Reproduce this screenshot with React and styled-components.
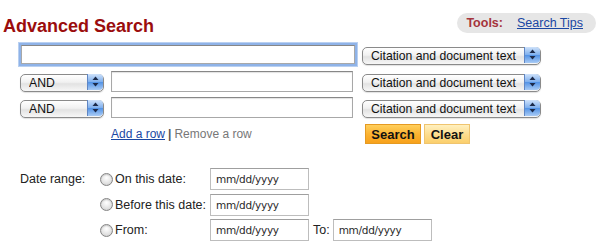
import styled, { createGlobalStyle } from "styled-components";

const GlobalStyle = createGlobalStyle`
  body {
    margin: 0;
    background: #fff;
    color: #222;
    font-family: "Liberation Sans", Arial, sans-serif;
  }
`;

const Page = styled.div`
  width: 600px;
`;

const Header = styled.header`
  display: flex;
  justify-content: space-between;
  align-items: flex-start;
  padding: 13px 4px 0 3px;
`;

const Title = styled.h1`
  margin: 2px 0 0;
  font-size: 18px;
  line-height: 22px;
  font-weight: 700;
  color: #9b0d0d;
`;

const ToolsPill = styled.div`
  display: flex;
  align-items: center;
  gap: 14px;
  height: 20px;
  padding: 0 13px 0 9px;
  border-radius: 10px;
  background: #e6e6e6;
  font-size: 12.5px;
`;

const ToolsLabel = styled.span`
  font-weight: 700;
  color: #a5343c;
`;

const Link = styled.a`
  color: #1a47a3;
  text-decoration: underline;
  cursor: pointer;
`;

const Form = styled.form`
  display: flex;
  flex-direction: column;
  gap: 5px;
  margin: 6px 0 0 19px;
`;

const QueryRow = styled.div`
  display: flex;
  align-items: center;
  padding-left: ${(p) => p.$indent || 0}px;
`;

const TermInput = styled.input`
  box-sizing: border-box;
  flex: none;
  width: ${(p) => p.$w}px;
  height: ${(p) => (p.$focused ? 19 : 21)}px;
  margin: ${(p) => (p.$focused ? "2px" : "0 0 0 7px")};
  border: 1px solid #a8a8a8;
  border-top-color: #878787;
  background: #fff;
  box-shadow: ${(p) =>
    p.$focused
      ? "0 0 0 2px #8fb3e8, 0 0 0 3px #b9d0f1"
      : "inset 0 1px 1px rgba(0,0,0,0.12)"};
  outline: none;
  font: 12px "Liberation Sans", Arial, sans-serif;
`;

const SelectWrap = styled.div`
  position: relative;
  flex: none;
  width: ${(p) => p.$w}px;
  height: 18px;
  margin-left: ${(p) => p.$ml || 0}px;
`;

const NativeSelect = styled.select`
  appearance: none;
  box-sizing: border-box;
  width: 100%;
  height: 100%;
  padding: 0 0 0 8px;
  border: 1px solid #8a8a8a;
  border-radius: 5px;
  background: linear-gradient(#ffffff, #f1f1f1 45%, #e2e2e2 55%, #f7f7f7);
  box-shadow: 0 1px 1px rgba(0, 0, 0, 0.12);
  color: #111;
  font: 12.2px "Liberation Sans", Arial, sans-serif;
  outline: none;
`;

const Stepper = styled.span`
  position: absolute;
  top: 1px;
  right: 1px;
  bottom: 1px;
  width: 15px;
  display: flex;
  align-items: center;
  justify-content: center;
  border-left: 1px solid #5f86c4;
  border-radius: 0 4px 4px 0;
  background: linear-gradient(#cfe2fa, #7fb0ee 48%, #5393e6 52%, #a9cbf5);
  pointer-events: none;
`;

const Actions = styled.div`
  display: flex;
  align-items: center;
  margin-top: 1px;
  padding-left: 92px;
`;

const LinkGroup = styled.div`
  width: 254px;
  font-size: 12px;
`;

const Pipe = styled.span`
  color: #555;
  font-weight: 700;
  margin: 0 3px;
`;

const Muted = styled.span`
  color: #777;
`;

const Button = styled.button`
  box-sizing: border-box;
  height: 20px;
  width: ${(p) => p.$w}px;
  margin-right: 3px;
  padding: 0;
  border: 1px solid ${(p) => (p.$primary ? "#e59a22" : "#efc46f")};
  background: ${(p) =>
    p.$primary
      ? "linear-gradient(#ffcf5c, #fbb12e 55%, #f7a11c)"
      : "linear-gradient(#fff0bf, #fddc8c 55%, #fbcf6c)"};
  color: #111;
  font: 700 13px "Liberation Sans", Arial, sans-serif;
  cursor: pointer;
`;

const DateGrid = styled.div`
  display: grid;
  grid-template-columns: 80px 110px 99px max-content 99px;
  justify-content: start;
  row-gap: 3.5px;
  align-items: center;
  margin: 24px 0 0 20px;
  font-size: 12.5px;
`;

const Option = styled.label`
  display: flex;
  align-items: center;
  gap: 2px;
  grid-column: 2;
`;

const Radio = styled.input`
  appearance: none;
  box-sizing: border-box;
  width: 13px;
  height: 13px;
  margin: 0;
  border: 1px solid #858585;
  border-radius: 50%;
  background: radial-gradient(circle at 50% 35%, #ffffff, #e2e2e2 60%, #c4c4c4);
  box-shadow: inset 0 1px 1px rgba(0, 0, 0, 0.15);
`;

const DateInput = styled.input`
  box-sizing: border-box;
  width: 99px;
  height: 22px;
  padding: 0 0 0 5px;
  border: 1px solid #bdbdbd;
  border-top-color: #9f9f9f;
  background: #fff;
  outline: none;
  font: 10.5px "DejaVu Sans", "Liberation Sans", sans-serif;
  letter-spacing: -0.3px;
  &::placeholder {
    color: #2a2a2a;
  }
`;

const ToLabel = styled.span`
  padding: 0 3px 0 4px;
`;

function Arrows() {
  return (
    <svg width="7" height="11" viewBox="0 0 7 11">
      <path d="M3.5 0.5 L6.5 4 L0.5 4 Z" fill="#1c2a4a" />
      <path d="M3.5 10.5 L6.5 7 L0.5 7 Z" fill="#1c2a4a" />
    </svg>
  );
}

function Select({ w, ml, options }) {
  return (
    <SelectWrap $w={w} $ml={ml}>
      <NativeSelect defaultValue={options[0]}>
        {options.map((o) => (
          <option key={o}>{o}</option>
        ))}
      </NativeSelect>
      <Stepper>
        <Arrows />
      </Stepper>
    </SelectWrap>
  );
}

const FIELDS = ["Citation and document text", "Citation", "Document title", "Author"];
const BOOLS = ["AND", "OR", "NOT"];

export default function App() {
  return (
    <Page>
      <GlobalStyle />
      <Header>
        <Title>Advanced Search</Title>
        <ToolsPill>
          <ToolsLabel>Tools:</ToolsLabel>
          <Link>Search Tips</Link>
        </ToolsPill>
      </Header>

      <Form onSubmit={(e) => e.preventDefault()}>
        <QueryRow>
          <TermInput $w={334} $focused />
          <Select w={179} ml={5} options={FIELDS} />
        </QueryRow>
        {[0, 1].map((i) => (
          <QueryRow key={i} $indent={1}>
            <Select w={84} options={BOOLS} />
            <TermInput $w={242} />
            <Select w={179} ml={9} options={FIELDS} />
          </QueryRow>
        ))}
        <Actions>
          <LinkGroup>
            <Link>Add a row</Link>
            <Pipe>|</Pipe>
            <Muted>Remove a row</Muted>
          </LinkGroup>
          <Button $primary $w={56}>Search</Button>
          <Button type="button" $w={46}>Clear</Button>
        </Actions>
      </Form>

      <DateGrid>
        <span>Date range:</span>
        <Option>
          <Radio type="radio" name="date" />
          On this date:
        </Option>
        <DateInput placeholder="mm/dd/yyyy" />
        <span />
        <span />

        <span />
        <Option>
          <Radio type="radio" name="date" />
          Before this date:
        </Option>
        <DateInput placeholder="mm/dd/yyyy" />
        <span />
        <span />

        <span />
        <Option>
          <Radio type="radio" name="date" />
          From:
        </Option>
        <DateInput placeholder="mm/dd/yyyy" />
        <ToLabel>To:</ToLabel>
        <DateInput placeholder="mm/dd/yyyy" />
      </DateGrid>
    </Page>
  );
}
